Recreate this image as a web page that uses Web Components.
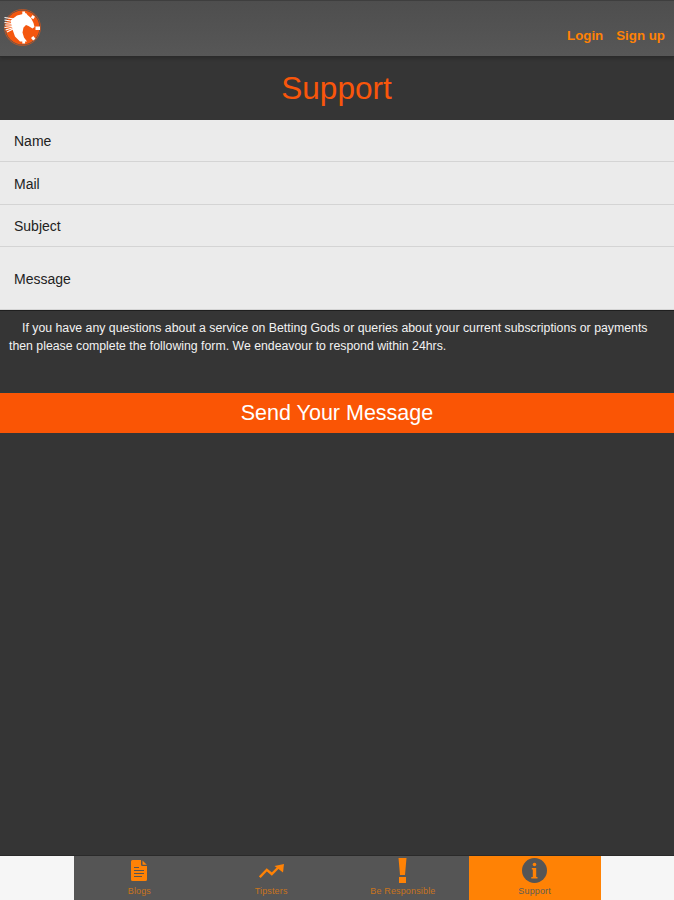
<!DOCTYPE html>
<html><head><meta charset="utf-8"><style>
html,body{margin:0;height:100%;background:#353535;font-family:"Liberation Sans",Arial,sans-serif}
body{display:flex;flex-direction:column;height:900px;overflow:hidden}
</style></head><body>
<app-header></app-header>
<page-title>Support</page-title>
<form-field h="42">Name</form-field>
<form-field h="43">Mail</form-field>
<form-field h="42">Subject</form-field>
<form-field h="63" last>Message</form-field>
<info-text>If you have any questions about a service on Betting Gods or queries about your current subscriptions or payments then please complete the following form. We endeavour to respond within 24hrs.</info-text>
<send-button>Send Your Message</send-button>
<div style="flex:1"></div>
<tab-bar>
<tab-item label="Blogs"><svg width="16" height="21" viewBox="0 0 16 21"><path fill="#ff8205" d="M1.500 0h8.500v4.500a1.500 1.500 0 0 0 1.500 1.500H16v13.500a1.500 1.500 0 0 1-1.500 1.500h-13A1.500 1.500 0 0 1 0 19.500v-18A1.500 1.500 0 0 1 1.500 0z"/><path fill="#ff8205" d="M11.500 .5 15.800 4.700h-4.300z"/><path stroke="#555" stroke-width="1" d="M3 7.500h5M3 10.500h10M3 13.500h10M3 16.500h8"/></svg></tab-item>
<tab-item label="Tipsters"><svg width="25" height="14" viewBox="0 0 25 14"><path fill="none" stroke="#ff8205" stroke-width="2.400" d="M.8 13.200 7.800 5.800l5 4.200 6.500-6.500"/><path fill="#ff8205" d="M15.500 2 25 0l-1 8.500z"/></svg></tab-item>
<tab-item label="Be Responsible"><svg width="9" height="25" viewBox="0 0 9 25"><path fill="#ff8205" d="M.5 0h8L7 17H2zM1 19h7v6H1z"/></svg></tab-item>
<tab-item label="Support" active><svg width="25" height="25" viewBox="0 0 25 25"><circle cx="12.500" cy="12.500" r="12.500" fill="#555"/><circle cx="12.500" cy="6.500" r="1.800" fill="#ff8205"/><path fill="#ff8205" d="M9.800 10h4.400v9h1.300v1.500H9.300V19h1.500v-7.500h-1z"/></svg></tab-item>
</tab-bar>
<script>
function def(name,css,html){customElements.define(name,class extends HTMLElement{constructor(){super();const s=this.attachShadow({mode:"open"});s.innerHTML="<style>"+css+"</style>"+html}})}
def("app-header",`:host{display:flex;justify-content:space-between;height:57px;box-sizing:border-box;background:linear-gradient(#4e4e4e,#575757);border-top:1px solid #3e3e3e;border-bottom:1px solid #2b2b2b;box-shadow:0 2px 3px rgba(0,0,0,.18);flex:none}
.logo{display:block;width:42px;height:40px;margin-top:8px}
nav{display:flex;gap:13px;padding:26px 9px 0 0;color:#ff8205;font-weight:700;font-size:13.300px;line-height:17px}`,
`<svg class="logo" viewBox="0 9 42 40"><circle cx="22.500" cy="27.500" r="17" fill="#f4570f"/><circle cx="22.500" cy="27.500" r="18" fill="none" stroke="#f4570f" stroke-width=".6"/>
<path fill="#fff" d="M22.300 11.500h2.800v4h-2.800zM22.300 40h2.800v3.500h-2.800zM35.500 26.500h4.500v3.500h-4.500zM32.500 15l2.500 1.700-1.700 2.600-2.500-1.700zM31 38l2.300-2 2.200 2.700-2.300 1.800z"/>
<path fill="#fff" d="M11 20l6-4.500 6-1.500 3-1 1.500 2 3.500 3 2.500 5 1 4-2 1.500-4-2.500-2.500-1-2.500 2.500-1 5 1.500 5 3 4h-7l-5-5-2.500-7-1.500-7z"/>
<path stroke="#fff" stroke-width="1.200" fill="none" d="M4.500 17.500 14 19M4.500 20 13 21.500M4.500 22.500 12 23.500M5 25h8M4.500 27.500 12 26.500M5.500 30 12 28M7 32l6-3"/></svg>
<nav><span>Login</span><span>Sign up</span></nav>`);
def("page-title",`:host{display:block;height:63px;flex:none;text-align:center;color:#f9560b;font-size:31.500px;line-height:63px;padding-right:1px}`,`<slot></slot>`);
customElements.define("form-field",class extends HTMLElement{constructor(){super();const s=this.attachShadow({mode:"open"});const h=this.getAttribute("h");s.innerHTML=`<style>:host{display:flex;align-items:center;flex:none;box-sizing:border-box;height:${h}px;padding:1px 14px 0;background:#ebebeb;color:#222;font-size:14px;border-bottom:1px solid #d4d4d4}:host([last]){box-shadow:0 1px #1f1f1f}</style><slot></slot>`}});
def("info-text",`:host{display:block;height:83px;flex:none;box-sizing:border-box;padding:9px 9px 0;color:#f2f2f2;font-size:12.300px;line-height:18px;text-indent:13px}`,`<slot></slot>`);
def("send-button",`:host{display:block;height:40px;flex:none;background:#fa5505;color:#fff;text-align:center;font-size:21.500px;line-height:40px;box-shadow:0 -1px #2c3a3c}`,`<slot></slot>`);
def("tab-bar",`:host{display:flex;flex:none;height:45px;box-sizing:border-box;justify-content:center;background:#f6f6f6;border-top:1px solid #2a2a2a}
div{display:grid;grid-template-columns:repeat(4,131.750px);width:527px;background:#555}`,`<div><slot></slot></div>`);
customElements.define("tab-item",class extends HTMLElement{constructor(){super();const s=this.attachShadow({mode:"open"});s.innerHTML=`<style>:host{display:flex;flex-direction:column;align-items:center;height:44px;position:relative;color:#c9741c}:host([active]){background:#ff8205;color:#5d5d55}
.i{height:27px;display:flex;align-items:center;justify-content:center;margin-top:1px}.l{line-height:11px;font-size:9px;letter-spacing:.15px;margin-top:2px}</style><div class="i"><slot></slot></div><div class="l">${this.getAttribute("label")}</div>`}});
</script>
</body></html>
